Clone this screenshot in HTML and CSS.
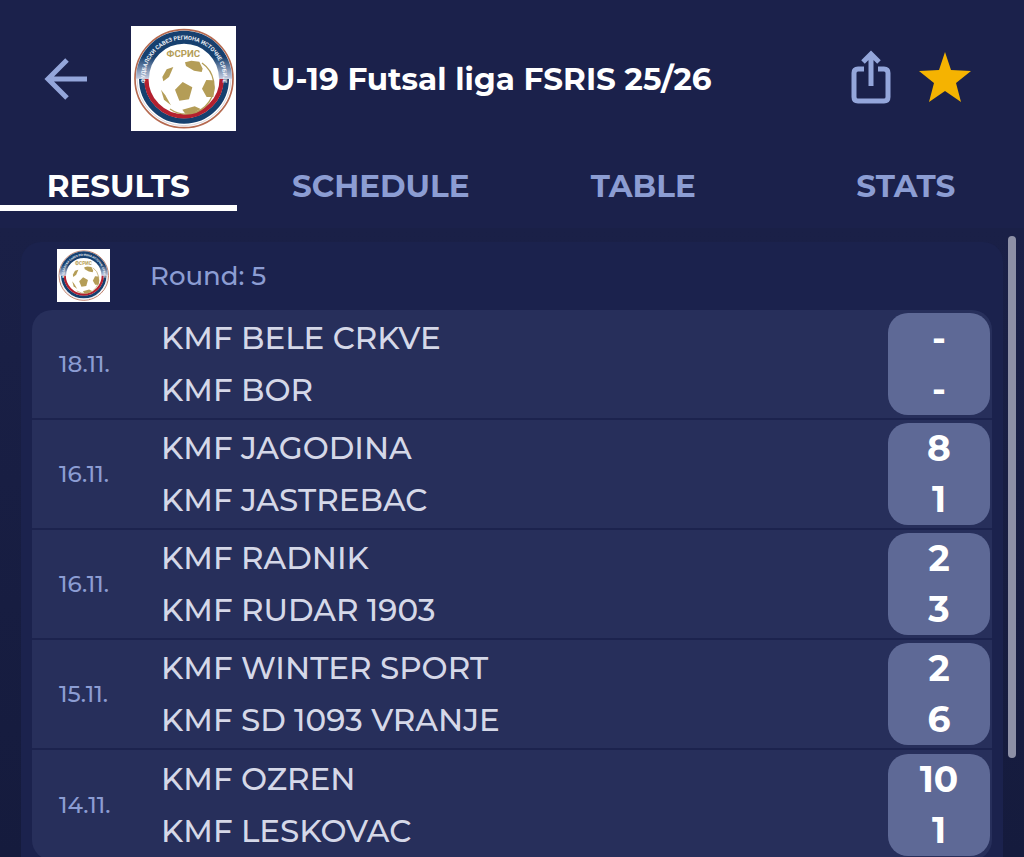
FILE: index.html
```
<!DOCTYPE html>
<html lang="en">
<head>
  <meta charset="UTF-8">
  <meta name="viewport" content="width=device-width, initial-scale=1.0">
  <title>U-19 Futsal liga FSRIS 25/26</title>
  <link rel="stylesheet" href="styles.css">
</head>
<body>

  <header>
    <div class="topbar">
      <button class="icon-btn back" aria-label="Back">
        <svg width="44" height="44" viewBox="0 0 44 44" fill="none" stroke="#94a6db" stroke-width="5">
          <path d="M43 22H5M23 3L4 22L23 41"/>
        </svg>
      </button>

      <svg class="logo" viewBox="33 30 315 315" role="img" aria-label="FSRIS">
        <defs>
          <linearGradient id="fade" x1="0" y1="0" x2="0" y2="1">
            <stop offset="0.55" stop-color="#17406f"/>
            <stop offset="1" stop-color="#c3cbe0"/>
          </linearGradient>
          <path id="arc" d="M79 218A117 117 0 1 1 305 218"/>
        </defs>
        <g id="crest">
          <rect x="33" y="30" width="315" height="315" fill="#fff"/>
          <circle cx="192" cy="188" r="147" fill="#fff" stroke="#b5694f" stroke-width="5"/>
          <circle cx="192" cy="188" r="141" fill="none" stroke="#d9d5dc" stroke-width="3"/>
          <path d="M65 188A127 127 0 0 0 319 188" fill="none" stroke="#15406f" stroke-width="16"/>
          <path d="M79 188A113 113 0 0 0 305 188" fill="none" stroke="#b3202f" stroke-width="13"/>
          <path d="M48 188A144 144 0 0 1 336 188H297A105 105 0 0 0 87 188Z" fill="url(#fade)"/>
          <text class="ring-text"><textPath href="#arc" startOffset="50%">ФУДБАЛСКИ САВЕЗ РЕГИОНА ИСТОЧНЕ СРБИЈЕ</textPath></text>
          <text class="short-text" x="190" y="124">ФСРИС</text>
          <g fill="#b49d57">
            <path d="M195 139L214 134L238 137L248 158L245 168L222 164L198 150Z"/>
            <path d="M160 153L140 160L127 183L130 196L147 183Z"/>
            <path d="M188 198L217 214L207 250L178 254L165 221Z"/>
            <path d="M259 192L279 193L284 216L280 243L260 243L246 218Z"/>
            <path d="M187 281L224 271L242 279L216 293L196 293Z"/>
            <path d="M123 221L136 238L153 268L132 251Z"/>
          </g>
          <path d="M246 141A84 84 0 0 1 150 279" fill="none" stroke="#b49d57" stroke-width="4"/>
        </g>
      </svg>

      <h1>U-19 Futsal liga FSRIS 25/26</h1>

      <button class="icon-btn share" aria-label="Share">
        <svg width="40" height="54" viewBox="0 0 40 54" fill="none" stroke="#94a6db" stroke-width="5">
          <path d="M13 19H7Q3 19 3 23V47Q3 51 7 51H33Q37 51 37 47V23Q37 19 33 19H27"/>
          <path d="M20 36V5M12 12L20 4L28 12"/>
        </svg>
      </button>
      <button class="icon-btn star" aria-label="Favourite">
        <svg width="52" height="50" viewBox="0 0 52 50">
          <path fill="#f5b301" d="M26 0L32 18L52 19L37 31L42 50L26 39L10 50L15 31L0 19L20 18Z"/>
        </svg>
      </button>
    </div>

    <nav>
      <a href="#" class="active">RESULTS</a>
      <a href="#">SCHEDULE</a>
      <a href="#">TABLE</a>
      <a href="#">STATS</a>
    </nav>
  </header>

  <main>
    <section class="card">
      <div class="round">
        <svg class="logo-small" viewBox="33 30 315 315" aria-hidden="true"><use href="#crest"/></svg>
        <h2>Round: 5</h2>
      </div>

      <table>
        <tbody>
          <tr>
            <td class="date">18.11.</td>
            <td class="teams"><div>KMF BELE CRKVE</div><div>KMF BOR</div></td>
            <td class="result"><div class="score"><span>-</span><span>-</span></div></td>
          </tr>
          <tr>
            <td class="date">16.11.</td>
            <td class="teams"><div>KMF JAGODINA</div><div>KMF JASTREBAC</div></td>
            <td class="result"><div class="score"><span>8</span><span>1</span></div></td>
          </tr>
          <tr>
            <td class="date">16.11.</td>
            <td class="teams"><div>KMF RADNIK</div><div>KMF RUDAR 1903</div></td>
            <td class="result"><div class="score"><span>2</span><span>3</span></div></td>
          </tr>
          <tr>
            <td class="date">15.11.</td>
            <td class="teams"><div>KMF WINTER SPORT</div><div>KMF SD 1093 VRANJE</div></td>
            <td class="result"><div class="score"><span>2</span><span>6</span></div></td>
          </tr>
          <tr>
            <td class="date">14.11.</td>
            <td class="teams"><div>KMF OZREN</div><div>KMF LESKOVAC</div></td>
            <td class="result"><div class="score"><span>10</span><span>1</span></div></td>
          </tr>
        </tbody>
      </table>
    </section>
    <div class="scrollbar"></div>
  </main>

</body>
</html>
```
FILE: styles.css
```
* {
  box-sizing: border-box;
}

body {
  margin: 0;
  height: 100vh;
  overflow: hidden;
  display: flex;
  flex-direction: column;
  background-color: #1b214b;
  color: #fff;
  font-family: Montserrat, Inter, sans-serif;
}

header {
  flex: none;
  padding-bottom: 17px;
}

.topbar {
  display: flex;
  align-items: center;
  padding: 26px 53px 26px 44px;
}

.icon-btn {
  padding: 0;
  border: none;
  background: none;
  cursor: pointer;
}

.icon-btn svg {
  display: block;
}

.back {
  margin-right: 43px;
}

.share,
.star {
  padding-bottom: 4px;
}

.star {
  margin-left: 28px;
}

.logo {
  width: 105px;
  height: 105px;
}

.logo-small {
  width: 53px;
  height: 53px;
}

.ring-text {
  font: bold 17px Roboto, sans-serif;
  fill: #eef1f7;
  text-anchor: middle;
}

.short-text {
  font: bold 29px Roboto, sans-serif;
  fill: #b49d57;
  text-anchor: middle;
}

h1 {
  flex: 1;
  margin: 0 0 0 35px;
  font-size: 31px;
  font-weight: 700;
}

nav {
  display: grid;
  grid-template-columns: repeat(4, 1fr);
  gap: 26px;
}

nav a {
  padding-top: 11px;
  border-bottom: 6px solid transparent;
  color: #8c9dd3;
  font-size: 31px;
  font-weight: 700;
  line-height: 37px;
  text-align: center;
  text-decoration: none;
}

nav a.active {
  color: #fff;
  border-color: #fff;
}

main {
  flex: 1;
  min-height: 0;
  display: flex;
  gap: 5px;
  padding: 8px 8px 0 21px;
  background: linear-gradient(#1a2047, #151b3d);
}

.card {
  flex: 1;
  align-self: flex-start;
  margin-top: 6px;
  padding: 7px 11px 20px;
  border-radius: 20px;
  background-color: #1b224d;
}

.round {
  display: flex;
  align-items: center;
  padding: 0 25px 8px;
}

h2 {
  margin: 0 0 0 40px;
  color: #8c9dd3;
  font-size: 26px;
  font-weight: 500;
}

table {
  width: 100%;
  border-spacing: 0;
  border-radius: 20px;
  overflow: hidden;
  background-color: #272f5b;
}

td {
  height: 110px;
  padding: 0;
  border-bottom: 2px solid #1c234e;
}

tr:last-child td {
  border-bottom: none;
}

.date {
  width: 129px;
  padding-left: 27px;
  color: #8c9dd3;
  font-size: 23px;
  font-weight: 500;
}

.teams {
  color: #d5d8e8;
  font-size: 31px;
  font-weight: 500;
  line-height: 52px;
}

.result {
  width: 104px;
  padding-right: 2px;
}

.score {
  display: flex;
  flex-direction: column;
  align-items: center;
  height: 102px;
  border-radius: 20px;
  background-color: #5e6996;
  font-size: 36px;
  font-weight: 700;
  line-height: 51px;
}

.scrollbar {
  flex: none;
  width: 8px;
  height: 84%;
  border-radius: 4px;
  background-color: #8d90a6;
}
```
